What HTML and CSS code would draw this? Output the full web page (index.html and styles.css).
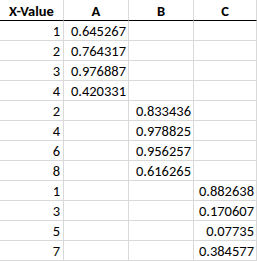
FILE: index.html
```html
<!DOCTYPE html>
<html>
<head>
<meta charset="utf-8">
<link rel="stylesheet" href="styles.css">
</head>
<body>
<table class="sheet">
  <colgroup>
    <col class="c1"><col class="c2"><col class="c3"><col class="c4">
  </colgroup>
  <thead>
    <tr><th>X-Value</th><th>A</th><th>B</th><th>C</th></tr>
  </thead>
  <tbody>
    <tr><td>1</td><td>0.645267</td><td></td><td></td></tr>
    <tr><td>2</td><td>0.764317</td><td></td><td></td></tr>
    <tr><td>3</td><td>0.976887</td><td></td><td></td></tr>
    <tr><td>4</td><td>0.420331</td><td></td><td></td></tr>
    <tr><td>2</td><td></td><td>0.833436</td><td></td></tr>
    <tr><td>4</td><td></td><td>0.978825</td><td></td></tr>
    <tr><td>6</td><td></td><td>0.956257</td><td></td></tr>
    <tr><td>8</td><td></td><td>0.616265</td><td></td></tr>
    <tr><td>1</td><td></td><td></td><td>0.882638</td></tr>
    <tr><td>3</td><td></td><td></td><td>0.170607</td></tr>
    <tr><td>5</td><td></td><td></td><td>0.07735</td></tr>
    <tr><td>7</td><td></td><td></td><td>0.384577</td></tr>
  </tbody>
</table>
</body>
</html>
```

FILE: styles.css
```css
html, body {
  margin: 0;
  padding: 0;
  background: #ffffff;
}
.sheet {
  border-collapse: separate;
  border-spacing: 0;
  table-layout: fixed;
  width: 257px;
  font-family: Carlito, "Liberation Sans", Arial, sans-serif;
  font-size: 14.5px;
  color: #000000;
}
.c1 { width: 64px; }
.c2 { width: 65px; }
.c3 { width: 65px; }
.c4 { width: 63px; }
.sheet th, .sheet td {
  padding: 0 2px 0 0;
  border-right: 1px solid #d9d9d9;
  border-bottom: 1px solid #d9d9d9;
  white-space: nowrap;
  overflow: hidden;
  box-sizing: border-box;
}
.sheet th {
  height: 21px;
  line-height: 18px;
  padding: 2px 0 0 0;
  font-weight: bold;
  text-align: center;
  border-bottom: 1px solid #000000;
  vertical-align: top;
}
.sheet td {
  height: 20px;
  line-height: 18px;
  padding-top: 1px;
  text-align: right;
  vertical-align: top;
}
.sheet td:first-child {
  padding-right: 3px;
}
```
